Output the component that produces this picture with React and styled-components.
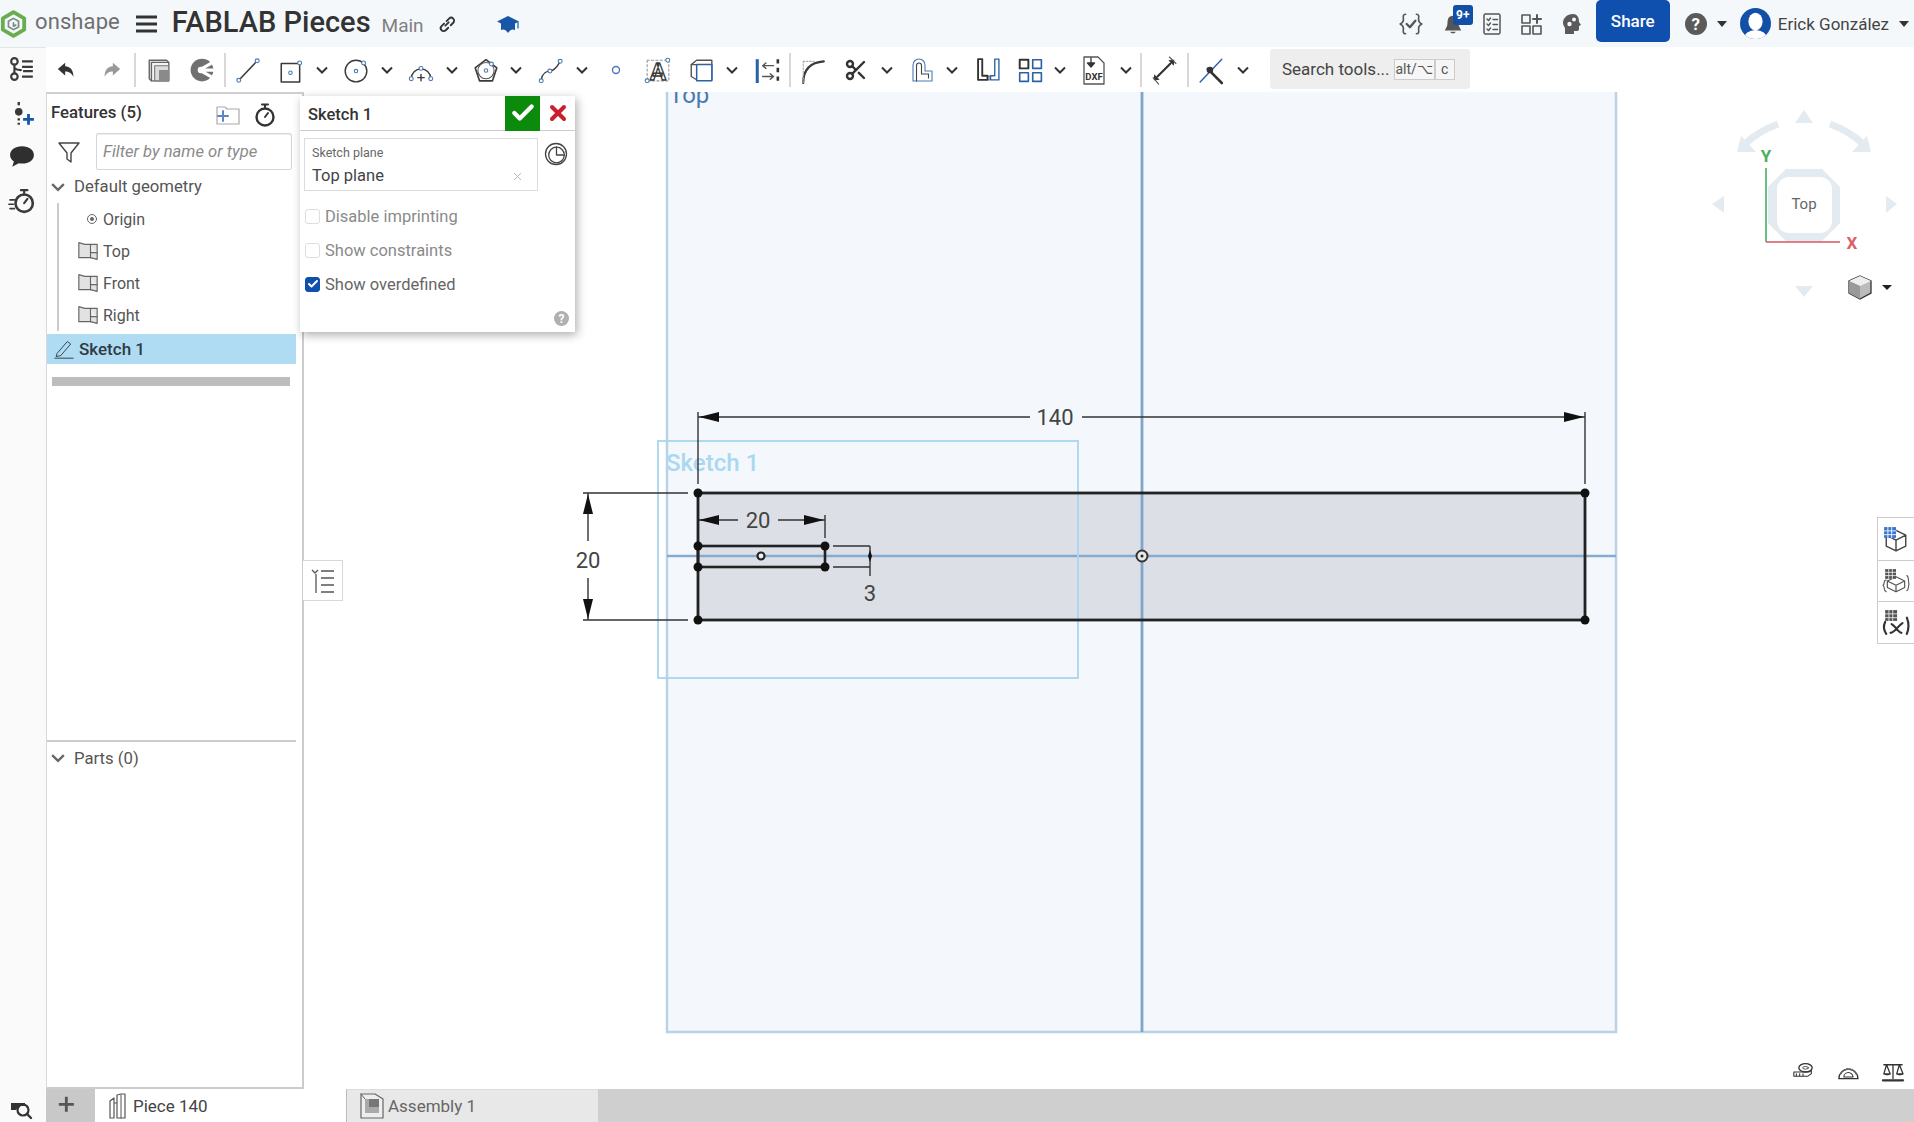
import React from "react";
import styled, { createGlobalStyle } from "styled-components";
import { Scissors, Check, X } from "lucide-react";

const Global = createGlobalStyle`
  html, body { margin: 0; padding: 0; height: 100%; background: #fff; overflow: hidden; }
  #root { height: 100%; }
  * { box-sizing: border-box; }
  body { font-family: Roboto, "Liberation Sans", sans-serif; color: #333; }
`;

const Page = styled.div`width: 1914px; height: 1122px; display: flex; flex-direction: column; overflow: hidden;`;
const TopBar = styled.header`height: 47px; flex: none; background: #f4f8fb; display: flex; align-items: center;`;
const TopItem = styled.div`display: flex; align-items: center; flex: none; margin-left: ${p => p.$ml || 0}px; position: relative;`;
const Word = styled.span`font-size: 22px; color: #6f6f6f; letter-spacing: 0.1px; margin-left: ${p => p.$ml || 0}px; padding-bottom: 4px;`;
const Title = styled.h1`margin: 0 0 0 ${p => p.$ml}px; font-size: 29px; font-weight: 500; color: #333; white-space: nowrap; padding-bottom: 4px;`;
const Branch = styled.span`margin-left: ${p => p.$ml}px; font-size: 19px; color: #808080; padding-top: 4px;`;
const Spacer = styled.div`flex: 1;`;
const Badge = styled.span`position: absolute; left: 11px; top: -7px; width: 20px; height: 20px; background: #1250a8; color: #fff; font-size: 12px; font-weight: 700; border-radius: 3px; display: flex; align-items: center; justify-content: center;`;
const ShareBtn = styled.button`margin-left: ${p => p.$ml}px; width: 74px; height: 42px; margin-top: -5px; border: 0; border-radius: 5px; background: #0f4fad; color: #fff; font: 500 17px Roboto, sans-serif; flex: none;`;
const UserName = styled.span`font-size: 17px; color: #444; margin-left: ${p => p.$ml}px; white-space: nowrap;`;
const Caret = styled.span`width: 0; height: 0; border-left: 5px solid transparent; border-right: 5px solid transparent; border-top: 6px solid #333; margin-left: ${p => p.$ml || 0}px; flex: none;`;

const Body = styled.div`flex: 1; display: flex; min-height: 0;`;
const Rail = styled.nav`width: 46px; flex: none; background: #fafafa; display: flex; flex-direction: column; align-items: center; padding-right: 3px; border-top: 1px solid #e4e4e4;`;
const RailIcon = styled.div`height: 24px; display: flex; align-items: center; justify-content: center; margin-top: ${p => p.$mt}px;`;
const RailEnd = styled.div`margin-top: auto; height: 22px; padding-bottom: 2px; display: flex; align-items: flex-end;`;
const MainCol = styled.div`flex: 1; display: flex; flex-direction: column; min-width: 0;`;
const Toolbar = styled.div`height: 45px; flex: none; background: #fff; display: flex; align-items: center; position: relative;`;
const Tool = styled.div`flex: none; width: ${p => p.$w}px; margin-left: ${p => p.$ml}px; display: flex; align-items: center; justify-content: center; height: 24px; overflow: visible;`;
const Sep = styled.div`flex: none; width: 2px; height: 34px; background: #d8d8d8; margin-left: ${p => p.$ml}px;`;
const SearchBox = styled.div`position: absolute; left: 1224px; top: 2px; width: 200px; height: 40px; background: #eeeeee; border-radius: 3px; display: flex; align-items: center; padding-left: 12px; font-size: 17px; color: #444;`;
const Kbd = styled.span`font-size: 14px; height: 21px; width: ${p => p.$w}px; border: 1px solid #ccc; background: #f6f6f6; color: #555; display: flex; align-items: center; justify-content: center; flex: none; margin-left: ${p => p.$ml || 0}px;`;

const Workspace = styled.div`flex: 1; display: flex; position: relative; min-height: 0;`;
const Panel = styled.aside`width: 258px; flex: none; background: #fff; border-left: 1px solid #d8d8d8; border-right: 2px solid #ccc; border-top: 2px solid #d0d0d0; border-bottom: 2px solid #ccc; display: flex; flex-direction: column;`;
const PanelTop = styled.div`flex: 1; display: flex; flex-direction: column; min-height: 0; width: 249px;`;
const PanelHead = styled.div`height: 39px; display: flex; align-items: center; padding-left: 4px; position: relative;`;
const PanelTitle = styled.span`font-size: 16.8px; font-weight: 500; color: #333; flex: 1; margin-top: -4px;`;
const HeadIcons = styled.div`display: flex; gap: 13px; margin-right: 19px; margin-top: 3px;`;
const FilterRow = styled.div`display: flex; align-items: center; height: 37px; padding-left: 10px;`;
const FilterInput = styled.div`width: 196px; height: 37px; margin-left: 15px; border: 1px solid #d6d6d6; border-radius: 2px; font-style: italic; font-size: 16.6px; color: #8a8a8a; display: flex; align-items: center; padding-left: 6px; box-shadow: inset 0 1px 1px #eee;`;
const GroupRow = styled.div`height: 33px; display: flex; align-items: center; padding-left: 4px; font-size: 16.7px; color: #555;`;
const GroupLabel = styled.span`margin-left: 9px;`;
const TreeList = styled.div`position: relative; margin-left: 10px; border-left: 2px solid #ccc; height: 128px; display: flex; flex-direction: column;`;
const TreeRow = styled.div`height: 32px; flex: none; display: flex; align-items: center; font-size: 16px; color: #555;`;
const TreeIconBox = styled.div`width: 44px; display: flex; justify-content: flex-end; padding-right: 5px; flex: none;`;
const Selected = styled.div`height: 30px; margin-top: 3px; background: #b0dcf3; display: flex; align-items: center; padding-left: 7px; font-size: 17px; font-weight: 500; color: #2f3a44; flex: none;`;
const SelLabel = styled.span`margin-left: 5px;`;
const ScrollBar = styled.div`height: 9px; margin: 13px 6px 0 5px; background: #bdbdbd; flex: none;`;
const PartsSection = styled.div`height: 347px; flex: none; width: 249px; border-top: 2px solid #ccc;`;
const PartsRow = styled(GroupRow)`height: 32px;`;

const Canvas = styled.main`flex: 1; position: relative; overflow: hidden; background: #fff; min-width: 0;`;
const Drawing = styled.svg`position: absolute; inset: 0; width: 100%; height: 100%; display: block;`;

const Dialog = styled.section`position: absolute; left: 254px; top: 4px; width: 275px; height: 236px; background: #fff; box-shadow: 2px 3px 9px rgba(0,0,0,.32); display: flex; flex-direction: column; z-index: 3;`;
const DialogHead = styled.div`height: 35px; flex: none; display: flex; align-items: center; border-bottom: 1px solid #ccc; padding-left: 8px;`;
const DialogTitle = styled.span`flex: 1; font-size: 16.5px; font-weight: 500; color: #333; padding-top: 3px;`;
const OkBtn = styled.div`width: 35px; height: 35px; background: #0b8a0b; display: flex; align-items: center; justify-content: center; color: #fff;`;
const CancelBtn = styled.div`width: 35px; height: 35px; display: flex; align-items: center; justify-content: center; color: #c8202c;`;
const FieldRow = styled.div`display: flex; padding: 7px 0 0 4px; align-items: flex-start;`;
const Field = styled.div`width: 234px; height: 53px; border: 1px solid #dcdcdc; padding: 6px 0 0 7px; position: relative; flex: none;`;
const FieldLabel = styled.div`font-size: 12.5px; color: #666; line-height: 15px;`;
const FieldValue = styled.div`font-size: 16.5px; color: #444; line-height: 20px; margin-top: 6px;`;
const FieldClear = styled.div`position: absolute; right: 13px; top: 31px; color: #aaa; display: flex;`;
const ClockWrap = styled.div`margin-left: 6px; margin-top: 4px;`;
const CheckList = styled.div`display: flex; flex-direction: column; margin-top: 8px; padding-left: 5px;`;
const CheckRow = styled.label`height: 34px; display: flex; align-items: center; font-size: 16.5px; color: ${p => p.$on ? "#666" : "#8a8a8a"};`;
const Box = styled.span`width: 15px; height: 15px; border-radius: 3px; margin-right: 5px; display: flex; align-items: center; justify-content: center; color: #fff; flex: none; background: ${p => p.$on ? "#0f4fad" : "#fff"}; border: 1px solid ${p => p.$on ? "#0f4fad" : "#ddd"};`;
const HelpCorner = styled.div`position: absolute; right: 6px; bottom: 6px; width: 15px; height: 15px; border-radius: 50%; background: #b0b0b0; color: #fff; font-size: 12px; font-weight: 700; display: flex; align-items: center; justify-content: center;`;

const PanelToggle = styled.div`position: absolute; left: 257px; top: 468px; width: 40px; height: 41px; background: #fff; border: 1px solid #d8d8d8; border-left: 0; display: flex; align-items: center; justify-content: center; z-index: 2;`;
const SideTabs = styled.div`position: absolute; right: 0; top: 425px; width: 37px; background: #fff; border: 1px solid #ccc; border-right: 0; display: flex; flex-direction: column;`;
const SideTab = styled.div`height: 41.5px; display: flex; align-items: center; justify-content: center; & + & { border-top: 1px solid #ccc; }`;
const MeasureTools = styled.div`position: absolute; right: 9px; bottom: 5px; display: flex; gap: 20px;`;

const Tabs = styled.div`height: 33px; flex: none; display: flex; background: #cfcfcf;`;
const PlusTab = styled.div`width: 49px; background: #c8c8c8; display: flex; align-items: center; justify-content: center; padding-right: 6px;`;
const TabItem = styled.div`width: ${p => p.$w}px; flex: none; background: ${p => p.$on ? "#fff" : "#e8e8e8"}; display: flex; align-items: center; padding-left: ${p => p.$on ? 14 : 13}px; font-size: 17px; color: ${p => p.$on ? "#444" : "#666"}; gap: 4px; border-left: ${p => p.$on ? "0" : "1px solid #bbb"}; border-top: ${p => p.$on ? "0" : "1px solid #ddd"};`;

/* ---------- drawn icons ---------- */
const I = ({ s = 24, w, h, vb = "0 0 24 24", children }) => (
  <svg width={w || s} height={h || s} viewBox={vb} fill="none" strokeLinecap="round" strokeLinejoin="round" style={{ display: "block", flex: "none", overflow: "visible" }}>{children}</svg>
);
const D = "#3a3a3a", B = "#4a7ab8", G = "#555";

const Logo = () => <I w={27} h={30}>
  <path d="M12 1.5 21.5 7v10L12 22.5 2.500 17V7z" stroke="#6aad4e" strokeWidth="3.4" />
  <path d="M12 7l4.500 2.600v5L12 17l-4.500-2.500v-5L12 7zM12 11v3l2-1" stroke="#7a8c80" strokeWidth="1.500" />
</I>;
const Burger = () => <I w={21} h={18} vb="0 0 21 18"><path d="M0 2h21M0 9h21M0 16h21" stroke="#333" strokeWidth="3" strokeLinecap="butt" /></I>;
const LinkI = () => <I s={20}><path d="M10 14l4-4M8.500 11.500l-3 3a3.500 3.500 0 0 0 5 5l3-3M11.500 8.500l3-3a3.500 3.500 0 0 1 5 5l-3 3" stroke="#333" strokeWidth="2.200" /></I>;
const Cap = () => <I s={24}><path d="M12 4 1 9.500l4 2V18c2-1 4.500-1 7 3 2.500-4 5-4 7-3v-6.500l4-2z" fill="#1a56a8" /><path d="M22 10v6" stroke="#1a56a8" strokeWidth="1.200" /></I>;
const Braces = () => <I s={26}><path d="M7 3c-3 0-2 3-2 5s-1 3-3 4c2 1 3 2 3 4s-1 5 2 5M17 3c3 0 2 3 2 5s1 3 3 4c-2 1-3 2-3 4s1 5-2 5" stroke={G} strokeWidth="1.500" /><path d="M8 12l3 3 5-6" stroke={G} strokeWidth="2.200" /></I>;
const Bell = () => <I w={22} h={24}><path d="M12 3c-5 0-6 4-6 8 0 4-2 6-3 8h18c-1-2-3-4-3-8 0-4-1-8-6-8zM9 20.500c1 2.500 5 2.500 6 0z" fill={G} /></I>;
const Checklist = () => <I s={24}><rect x="4" y="2" width="16" height="20" rx="1.500" stroke={G} strokeWidth="1.500" /><path d="M7 7l1.500 1.500L10.500 6M13 7.500h4.500M7 12l1.500 1.500L10.500 11M13 12.500h4.500M7 17l1.500 1.500L10.500 16M13 17.500h4.500" stroke={G} strokeWidth="1.400" /></I>;
const Apps = () => <I s={24}><path d="M3 3h8v8H3zM3 14h8v8H3zM14 14h8v8h-8z" stroke={G} strokeWidth="1.600" /><path d="M18 3v8M14 7h8" stroke={G} strokeWidth="2" /></I>;
const Head = () => <I s={24}><path d="M13 2C7 2 3 6 3 11c0 2 1 3 2 5v6h9v-3h3c1.500 0 2-1 2-2v-3l2-1-2-3c0-5-2-8-6-8z" fill="#5a5a5a" /><circle cx="9.500" cy="12" r="2.200" fill="#f4f8fb" /><circle cx="14" cy="7.500" r="2" fill="#f4f8fb" /></I>;
const TopItemCircle = styled.div`width: 22px; height: 22px; border-radius: 50%; background: #5a5a5a; color: #fff; font-size: 17px; font-weight: 700; display: flex; align-items: center; justify-content: center;`;
const HelpI = () => <TopItemCircle>?</TopItemCircle>;
const Avatar = () => <I s={31}><defs><clipPath id="av"><circle cx="12" cy="12" r="12" /></clipPath></defs><g clipPath="url(#av)"><rect width="24" height="24" fill="#1250a8" /><ellipse cx="12" cy="10.500" rx="5.500" ry="6.800" fill="#fff" /><ellipse cx="12" cy="24" rx="9" ry="7" fill="#fff" /></g></I>;

const RailTree = () => <I s={26}><circle cx="5" cy="5" r="3" stroke={D} strokeWidth="2" /><circle cx="5" cy="19" r="3" stroke={D} strokeWidth="2" /><path d="M5 8v8M5 11c2 2 4 2 6 2" stroke={D} strokeWidth="2" /><path d="M12 5h10M12 10h10M13 14h9M12 19h10" stroke={D} strokeWidth="2" strokeLinecap="butt" /></I>;
const RailInsert = () => <I s={26}><circle cx="9" cy="10" r="3.500" fill={D} /><path d="M9 1v3M9 16v2M9 20v2" stroke={D} strokeWidth="2.200" strokeLinecap="butt" /><path d="M18 12v10M13 17h10" stroke="#1a56a8" strokeWidth="2.600" strokeLinecap="butt" /></I>;
const RailComment = () => <I s={26}><path d="M12 3C5.500 3 1 6.500 1 11c0 2.500 1.500 4.500 3.500 6L3 22l6-3.300c1 .2 2 .3 3 .3 6.500 0 11-3.500 11-8s-4.500-8-11-8z" fill="#2f2f2f" /></I>;
const RailWatch = () => <I s={26}><circle cx="14" cy="14" r="8" stroke={D} strokeWidth="2.400" /><path d="M11 2h6M14 2v4M14 14l3-4" stroke={D} strokeWidth="2" /><path d="M1 11h4M0 15h4M1 19h4" stroke={D} strokeWidth="1.600" /></I>;
const SearchCam = () => <I s={24}><path d="M1 7h14v3h-6l-3 4H1z" fill="#333" /><circle cx="13" cy="14" r="5.500" stroke="#333" strokeWidth="2.200" /><path d="M17 18l4 4" stroke="#333" strokeWidth="2.400" /></I>;

const Undo = ({ c = "#333" }) => <I s={22}><path d="M10 4 2 11l8 7v-4.500c4 0 7 1.500 9 6 0-7-3-11-9-11.500z" fill={c} /></I>;
const Redo = () => <I s={22}><path d="M14 4l8 7-8 7v-4.500c-4 0-7 1.500-9 6 0-7 3-11 9-11.500z" fill="#999" /></I>;
const Studio = () => <I s={26}><path d="M3 3h16l2 2v17H5l-2-2z" fill="#f4f4f4" stroke="#666" strokeWidth="1.300" /><path d="M5 5h16M5 5v17" stroke="#666" strokeWidth="1.300" /><rect x="8" y="8" width="13" height="14" fill="#dcdcdc" stroke="#777" /><rect x="12" y="12" width="9" height="10" fill="#8a8a8a" /></I>;
const Sub = () => <I s={26}><circle cx="12" cy="12" r="10.500" fill="#707070" /><circle cx="11" cy="12" r="3" fill="#fff" /><path d="M13 10l9-5M13 14l9 5M14 12h9" stroke="#fff" strokeWidth="3" /></I>;
const Pt = ({ x, y, r = 1.800 }) => <circle cx={x} cy={y} r={r} fill="#fff" stroke={B} strokeWidth="1" />;
const LineI = () => <I s={26}><path d="M4 21 20 4" stroke={D} strokeWidth="1.400" /><Pt x={3.500} y={21.500} /><Pt x={20.500} y={3.500} /></I>;
const RectI = () => <I s={26}><rect x="3" y="6" width="17" height="17" stroke={D} strokeWidth="1.400" /><Pt x={11.500} y={14.500} r={1.600} /><Pt x={20} y={5.500} /></I>;
const CircleI = () => <I s={26}><circle cx="12" cy="13" r="10" stroke={D} strokeWidth="1.300" /><Pt x={12} y={13} r={1.600} /><Pt x={19} y={5.500} /></I>;
const ArcI = () => <I s={26}><path d="M3 20a9 9 0 0 1 18 0" stroke={D} strokeWidth="1.300" /><Pt x={3} y={20} /><Pt x={21} y={20} /><Pt x={12} y={10.500} /><path d="M12 16v6M9 19h6" stroke={D} strokeWidth="1.300" /></I>;
const PolyI = () => <I s={26}><path d="M12 2.500 22 10l-4 12H6L2 10z" stroke={D} strokeWidth="1.500" /><circle cx="12" cy="12.500" r="7.500" stroke={G} strokeWidth="1" /><Pt x={12} y={12.500} r={1.600} /><Pt x={17} y={6.500} /></I>;
const SplineI = () => <I s={26}><path d="M3 21c1-6 5-8 8-8s6-3 9-8" stroke={D} strokeWidth="1.300" /><Pt x={3} y={22} /><Pt x={11} y={13} /><Pt x={20.500} y={4} /></I>;
const PointI = () => <I s={14} vb="0 0 14 14"><circle cx="7" cy="7" r="3.500" stroke={B} strokeWidth="1.400" /></I>;
const TextI = () => <I s={26}><rect x="2" y="3" width="20" height="19" stroke="#999" strokeDasharray="2 2" /><text x="12" y="21" fontSize="22" textAnchor="middle" fontFamily="Roboto" fontWeight="700" fill="#fff" stroke={D} strokeWidth="1.200">A</text><Pt x={21} y={3} /><Pt x={2} y={22} /></I>;
const PlaneI = () => <I s={26}><path d="M3 7l5-4h14v18H8l-5-3z" fill="#fff" stroke="#555" strokeWidth="1.300" /><rect x="8" y="7" width="14" height="15" fill="#fff" stroke="#2a62a8" strokeWidth="1.400" /><path d="M3 7l5 0" stroke="#555" /></I>;
const MirrorI = () => <I s={26}><path d="M3 2v22" stroke="#2a62a8" strokeWidth="2.800" strokeLinecap="butt" /><path d="M22 2v22" stroke="#333" strokeWidth="2.400" strokeDasharray="4 4" strokeLinecap="butt" /><path d="M8 8h10M8 8l3-2.500M8 8l3 2.500M8 18h10M18 18l-3-2.500M18 18l-3 2.500" stroke="#555" strokeWidth="1.300" /></I>;
const FilletI = () => <I s={26}><path d="M3 24c0-12 6-19 19-20" stroke={D} strokeWidth="2" /><path d="M3 4h10M3 4v20" stroke="#aaa" strokeDasharray="1.500 1.500" /></I>;
const OffsetI = () => <I s={24}><path d="M3 23V7a6 6 0 0 1 12 0v6h7v10z" stroke="#4a7ab8" strokeWidth="1.100" /><path d="M6.500 23V7.500a2.500 2.500 0 0 1 5 0V16h7v4" stroke="#444" strokeWidth="1.100" /></I>;
const TransI = () => <I s={25}><path d="M2 2h4v16h5v4H2z" stroke="#333" strokeWidth="1.800" /><path d="M18 2h4v20h-8v-4h4z" stroke="#2a62a8" strokeWidth="1.300" /><path d="M12.500 18v4" stroke="#333" strokeDasharray="1.500 1.500" /></I>;
const PatternI = () => <I s={26}><rect x="2.500" y="2.500" width="8" height="8" stroke="#333" strokeWidth="1.800" /><rect x="14.500" y="2.500" width="8" height="8" stroke="#2a62a8" strokeWidth="1.500" /><rect x="2.500" y="14.500" width="8" height="8" stroke="#2a62a8" strokeWidth="1.500" /><rect x="14.500" y="14.500" width="8" height="8" stroke="#2a62a8" strokeWidth="1.500" /></I>;
const DxfI = () => <I w={24} h={30} vb="0 0 24 30"><path d="M2 2h14l6 6v21H2z" fill="#fff" stroke="#555" strokeWidth="1.300" /><path d="M9 3v8M5.500 8 9 12l3.500-4z" fill="#333" stroke="#333" strokeWidth="1.300" /><text x="12" y="25" fontSize="9.500" fontWeight="700" fontFamily="Roboto" textAnchor="middle" fill="#333">DXF</text></I>;
const DimI = () => <I s={26}><path d="M6 18 18 6" stroke="#333" strokeWidth="2" /><path d="M3 16l-.5 5.500L8 21zM16 3l5.500-.5L21 8z" fill="#333" /><path d="M2 19l5 6M17 0l6 6" stroke="#555" strokeWidth="1" /></I>;
const SnapI = () => <I s={26}><path d="M2 23 22 2" stroke="#2a62a8" strokeWidth="1.300" /><path d="M9 11l13 13" stroke="#333" strokeWidth="2.400" /><circle cx="11" cy="12" r="3" fill="#333" /></I>;
const Chev = ({ c = "#333", s = 12 }) => <I w={s} h={s} vb="0 0 12 12"><path d="M1 3.500 6 8.500 11 3.500" stroke={c} strokeWidth="2" strokeLinecap="butt" strokeLinejoin="miter" /></I>;

const FolderPlus = () => <I s={24}><path d="M1 4h8l2 2h12v15H1z" stroke="#aaa" strokeWidth="1.200" /><path d="M7 8v10M2 13h10" stroke="#5a86c8" strokeWidth="2" /></I>;
const Watch = () => <I s={24}><circle cx="12" cy="14" r="8.500" stroke="#333" strokeWidth="2.400" /><path d="M9 1.500h6M12 2v3M12 14l3-4" stroke="#333" strokeWidth="2" /></I>;
const Funnel = () => <I s={24}><path d="M2 3h20l-8 10v9l-4-3v-6z" stroke="#444" strokeWidth="1.400" /></I>;
const OriginI = () => <I s={12} vb="0 0 12 12"><circle cx="6" cy="6" r="4.500" stroke="#666" strokeWidth="1" /><circle cx="6" cy="6" r="2" fill="#666" /></I>;
const PlaneTree = () => <I w={20} h={20}><path d="M1 2l7 2h15v18l-8-2H1z" fill="#e2e2e2" stroke="#666" strokeWidth="1.400" /><path d="M15 4v10h8" fill="#eee" stroke="#666" strokeWidth="1.400" /><path d="M15 14v6" stroke="#666" strokeWidth="1.400" /></I>;
const Pencil = () => <I s={20}><path d="M4 17 16 3l4 3L8 20l-5 1zM1 23h22" stroke="#37474f" strokeWidth="1.200" /></I>;
const ClockI = () => <I s={24}><circle cx="12" cy="12" r="10.500" stroke="#444" strokeWidth="1.300" /><circle cx="12.500" cy="13" r="7.800" stroke="#444" strokeWidth="1.300" /><path d="M12.500 5v8h8" fill="#fff" stroke="#444" strokeWidth="1.300" /></I>;
const ToggleI = () => <I s={24}><path d="M1 1l3 3 3-3M5 5v19M10 2h13M10 9h13M10 16h13M10 23h13" stroke="#555" strokeWidth="1.300" strokeLinecap="butt" /></I>;
const Cube = ({ c = "#444" }) => <path d="M12 4 21 8.500v10L12 23l-9-4.500v-10zM3 8.500 12 13l9-4.500M12 13v10" stroke={c} strokeWidth="1.300" fill="#fff" />;
const SideA = () => <I s={26}><Cube /><g fill="#3a75cc"><rect x="1" y="1" width="11" height="10" /></g><path d="M4.500 1v10M8 1v10M1 4.500h11M1 8h11" stroke="#fff" strokeWidth=".8" /></I>;
const SideB = () => <I s={26}><path d="M12 8 20 12v6l-8 4-8-4v-6zM4 12l8 4 8-4M12 16v6" stroke="#555" strokeWidth="1.100" fill="#fff" /><rect x="2" y="1" width="10" height="9" fill="#555" /><path d="M5.300 1v9M8.600 1v9M2 4h10M2 7h10" stroke="#fff" strokeWidth=".7" /><path d="M3 11c-3 0-1 4-3 5 2 1 0 5 3 6M22 7c2 1 1 4 2 8-1 3 0 5-2 6" stroke="#555" /></I>;
const SideC = () => <I s={26}><rect x="2" y="1" width="11" height="10" fill="#555" /><path d="M5.500 1v10M9 1v10M2 4.500h11M2 8h11" stroke="#fff" strokeWidth=".7" /><path d="M2 12c-2 4-1 8 1 11M22 8c2 5 2 10 0 15M7 22c4 0 6-6 11-9M8 14c3 1 6 8 9 8" stroke="#333" strokeWidth="2" /></I>;
const Tape = () => <I w={24} h={20}><ellipse cx="15" cy="7" rx="8" ry="5" stroke="#333" strokeWidth="1.600" /><ellipse cx="15" cy="7" rx="3.500" ry="1.600" stroke="#333" /><path d="M1 12h7l3 0h8l3-2v4l-4 3H1zM4 14v3M8 14v3M12 14v3" stroke="#333" strokeWidth="1.300" /></I>;
const Protractor = () => <I w={26} h={20}><path d="M1 20a11.500 11.500 0 0 1 23 0z" stroke="#333" strokeWidth="1.600" /><path d="M7 18a5.500 5.500 0 0 1 11 0z" stroke="#333" strokeWidth="1.300" /><path d="M3.500 14a10 10 0 0 1 18 0" stroke="#666" strokeWidth="2" strokeDasharray="1 2" /></I>;
const Scale = () => <I w={24} h={22}><path d="M2 3h20M12 3v15M5 3 2 13h7zM19 3l-3 10h7z" stroke="#333" strokeWidth="1.400" /><path d="M2 13c1 2 6 2 7 0zM16 13c1 2 6 2 7 0z" fill="#333" /><path d="M1 20h22" stroke="#333" strokeWidth="2.400" /></I>;
const PieceI = () => <I w={20} h={26} vb="0 0 20 26"><path d="M1 8l4-3v20H1zM5 10h3M8 2l4-1 4 0v24H8z" stroke="#555" strokeWidth="1.200" /><path d="M12 2v23" stroke="#555" /></I>;
const AsmI = () => <I w={24} h={28} vb="0 0 24 28"><path d="M1 2h14l8 5v19l-8 0H1z" fill="#eee" stroke="#666" strokeWidth="1.200" /><path d="M5 7h14v14H5z" fill="#aaa" /><path d="M9 7h10v8H9z" fill="#777" /><path d="M1 2l4 5" stroke="#666" /></I>;
const Plus = () => <I s={20}><path d="M10 1v18M1 10h18" stroke="#555" strokeWidth="3.400" strokeLinecap="butt" /></I>;

/* toolbar: [kind, centre x on the page, icon] */
const toolItems = [
  ["t", 67, <Undo />], ["t", 111, <Redo />], ["s", 135], ["t", 159, <Studio />], ["t", 202, <Sub />], ["s", 225],
  ["t", 248, <LineI />], ["t", 291, <RectI />], ["c", 322], ["t", 356, <CircleI />], ["c", 387], ["t", 421, <ArcI />], ["c", 452],
  ["t", 486, <PolyI />], ["c", 516], ["t", 551, <SplineI />], ["c", 582], ["t", 616, <PointI />], ["t", 658, <TextI />],
  ["t", 701, <PlaneI />], ["c", 732], ["t", 767, <MirrorI />], ["s", 790], ["t", 813, <FilletI />],
  ["t", 856, <Scissors size={24} color="#333" strokeWidth={2.4} />], ["c", 887], ["t", 922, <OffsetI />], ["c", 952], ["t", 988, <TransI />],
  ["t", 1030, <PatternI />], ["c", 1060], ["t", 1094, <DxfI />], ["c", 1126], ["s", 1141], ["t", 1164, <DimI />], ["s", 1188],
  ["t", 1211, <SnapI />], ["c", 1243],
];
const width = { t: 26, c: 12, s: 2 };
const laidOut = toolItems.map((it, i) => {
  const prev = toolItems[i - 1];
  const w = width[it[0]];
  const prevEnd = prev ? prev[1] + width[prev[0]] / 2 : 46;
  return { kind: it[0], w, ml: it[1] - w / 2 - prevEnd, icon: it[2] };
});

const Arrow = ({ x, y, dir }) => {
  const L = 20, H = 5;
  const pts = {
    l: `${x},${y} ${x + L},${y - H} ${x + L},${y + H}`,
    r: `${x},${y} ${x - L},${y - H} ${x - L},${y + H}`,
    u: `${x},${y} ${x - H},${y + L} ${x + H},${y + L}`,
    d: `${x},${y} ${x - H},${y - L} ${x + H},${y - L}`,
  }[dir];
  return <polygon points={pts} fill="#111" />;
};
const DimText = styled.text`font: 400 22px Roboto, sans-serif; fill: #444; text-anchor: middle; dominant-baseline: central;`;
const PlaneText = styled.text`font: 400 24px Roboto, sans-serif; fill: #4a7ab0;`;
const SketchText = styled.text`font: 500 24px Roboto, sans-serif; fill: #a9d8f2;`;
const CubeText = styled.text`font: 400 15px Roboto, sans-serif; fill: #666; text-anchor: middle; dominant-baseline: central;`;
const AxisText = styled.text`font: 700 17px Roboto, sans-serif; fill: ${p => p.$c}; text-anchor: middle; dominant-baseline: central;`;

const SketchDot = ({ x, y }) => <circle cx={x} cy={y} r="4.500" fill="#111" />;

const Scene = () => (
  <Drawing viewBox="304 92 1610 997">
    <rect x="667" y="60" width="949" height="972" fill="#f4f8fc" stroke="#b9d2e6" strokeWidth="2.500" />
    <PlaneText x="669" y="103">Top</PlaneText>
    <rect x="698" y="493" width="887" height="127" fill="#dcdfe5" />
    <path d="M1142 60V1032" stroke="#7ea6cb" strokeWidth="2.800" />
    <path d="M667 556H1616" stroke="#86abd0" strokeWidth="2.400" />
    <rect x="658" y="441" width="420" height="237" fill="none" stroke="#a9d6ee" strokeWidth="1.800" />
    <SketchText x="666" y="471">Sketch 1</SketchText>
    {/* overall width */}
    <path d="M698 412V484M1585 412V484M698 417H1030M1082 417H1585" stroke="#333" strokeWidth="1.400" fill="none" />
    <Arrow x={699} y={417} dir="l" /><Arrow x={1584} y={417} dir="r" />
    <DimText x="1055" y="417">140</DimText>
    {/* overall height */}
    <path d="M583 493H688M583 620H688M588 493V541M588 578V620" stroke="#333" strokeWidth="1.400" fill="none" />
    <Arrow x={588} y={494} dir="u" /><Arrow x={588} y={619} dir="d" />
    <DimText x="588" y="560">20</DimText>
    {/* slot width */}
    <path d="M698 520H738M778 520H825M825 515V538" stroke="#333" strokeWidth="1.400" fill="none" />
    <Arrow x={699} y={520} dir="l" /><Arrow x={824} y={520} dir="r" />
    <DimText x="758" y="520">20</DimText>
    {/* slot height */}
    <path d="M833 546H870M833 567H870M870 546V576" stroke="#333" strokeWidth="1.400" fill="none" />
    <polygon points="870,550 868,556 870,562 872,556" fill="#111" />
    <DimText x="870" y="593">3</DimText>
    {/* outline */}
    <rect x="698" y="493" width="887" height="127" fill="none" stroke="#222" strokeWidth="2.800" />
    <rect x="698" y="546" width="127" height="21" fill="none" stroke="#222" strokeWidth="2.600" />
    {[[698, 493], [1585, 493], [698, 620], [1585, 620], [698, 546], [698, 567], [825, 546], [825, 567]].map(([x, y]) => <SketchDot key={x + "-" + y} x={x} y={y} />)}
    <circle cx="761" cy="556" r="3.500" fill="#eef0f3" stroke="#222" strokeWidth="2.200" />
    <circle cx="1142" cy="556" r="5.500" fill="#e8e8ea" stroke="#333" strokeWidth="2" />
    <circle cx="1142" cy="556" r="1.500" fill="#222" />
    {/* view cube */}
    <g fill="#e3eaf0">
      <polygon points="1804,110 1795,123 1813,123" />
      <polygon points="1712,204 1724,196 1724,213" />
      <polygon points="1897,204 1886,196 1886,213" />
      <polygon points="1804,297 1795,286 1813,286" />
      <polygon points="1737,152 1756,152 1741,136" />
      <polygon points="1871,152 1852,152 1867,136" />
      <path d="M1786 169h36l18 18v36l-18 18h-36l-18-18v-36z" />
    </g>
    <path d="M1778 124Q1759 131 1746 143M1830 124Q1849 131 1862 143" stroke="#e3eaf0" strokeWidth="7" fill="none" />
    <rect x="1777" y="177" width="55" height="56" rx="12" fill="#fff" />
    <CubeText x="1804" y="204">Top</CubeText>
    <path d="M1766 168V242" stroke="#3aa655" strokeWidth="1.500" />
    <path d="M1766 242H1840" stroke="#d9535c" strokeWidth="1.500" />
    <AxisText $c="#4cae5f" x="1766" y="156">Y</AxisText>
    <AxisText $c="#dc5f68" x="1852" y="243">X</AxisText>
    <path d="M1860 276l11 5v12l-11 6-11-6v-12z" fill="#bbb" stroke="#333" strokeWidth="1.300" />
    <path d="M1860 276l11 5-11 5-11-5z" fill="#eee" />
    <path d="M1860 286v13l-11-6v-12z" fill="#999" />
    <polygon points="1882,285 1892,285 1887,290" fill="#222" />
  </Drawing>
);

export default function App() {
  return (
    <Page>
      <Global />
      <TopBar>
        <TopItem><Logo /></TopItem>
        <Word $ml={8}>onshape</Word>
        <TopItem $ml={16}><Burger /></TopItem>
        <Title $ml={15}>FABLAB Pieces</Title>
        <Branch $ml={11}>Main</Branch>
        <TopItem $ml={13}><LinkI /></TopItem>
        <TopItem $ml={39}><Cap /></TopItem>
        <Spacer />
        <TopItem><Braces /></TopItem>
        <TopItem $ml={18}><Bell /><Badge>9+</Badge></TopItem>
        <TopItem $ml={16}><Checklist /></TopItem>
        <TopItem $ml={15}><Apps /></TopItem>
        <TopItem $ml={17}><Head /></TopItem>
        <ShareBtn $ml={12}>Share</ShareBtn>
        <TopItem $ml={15}><HelpI /></TopItem>
        <Caret $ml={10} />
        <TopItem $ml={13}><Avatar /></TopItem>
        <UserName $ml={7}>Erick González</UserName>
        <Caret $ml={10} />
        <TopItem $ml={5} />
      </TopBar>
      <Body>
        <Rail>
          <RailIcon $mt={9}><RailTree /></RailIcon>
          <RailIcon $mt={21}><RailInsert /></RailIcon>
          <RailIcon $mt={18}><RailComment /></RailIcon>
          <RailIcon $mt={21}><RailWatch /></RailIcon>
          <RailEnd><SearchCam /></RailEnd>
        </Rail>
        <MainCol>
          <Toolbar>
            {laidOut.map((t, i) => t.kind === "s"
              ? <Sep key={i} $ml={t.ml} />
              : <Tool key={i} $w={t.w} $ml={t.ml}>{t.kind === "c" ? <Chev /> : t.icon}</Tool>)}
            <SearchBox>
              Search tools...
              <Kbd $w={41} $ml={4}>alt/⌥</Kbd>
              <Kbd $w={20}>c</Kbd>
            </SearchBox>
          </Toolbar>
          <Workspace>
            <Panel>
              <PanelTop>
                <PanelHead>
                  <PanelTitle>Features (5)</PanelTitle>
                  <HeadIcons><FolderPlus /><Watch /></HeadIcons>
                </PanelHead>
                <FilterRow>
                  <Funnel />
                  <FilterInput>Filter by name or type</FilterInput>
                </FilterRow>
                <GroupRow><Chev c="#666" s={14} /><GroupLabel>Default geometry</GroupLabel></GroupRow>
                <TreeList>
                  <TreeRow><TreeIconBox><OriginI /></TreeIconBox>Origin</TreeRow>
                  <TreeRow><TreeIconBox><PlaneTree /></TreeIconBox>Top</TreeRow>
                  <TreeRow><TreeIconBox><PlaneTree /></TreeIconBox>Front</TreeRow>
                  <TreeRow><TreeIconBox><PlaneTree /></TreeIconBox>Right</TreeRow>
                </TreeList>
                <Selected><Pencil /><SelLabel>Sketch 1</SelLabel></Selected>
                <ScrollBar />
              </PanelTop>
              <PartsSection>
                <PartsRow><Chev c="#666" s={14} /><GroupLabel>Parts (0)</GroupLabel></PartsRow>
              </PartsSection>
            </Panel>
            <Canvas>
              <Scene />
              <SideTabs>
                <SideTab><SideA /></SideTab>
                <SideTab><SideB /></SideTab>
                <SideTab><SideC /></SideTab>
              </SideTabs>
              <MeasureTools><Tape /><Protractor /><Scale /></MeasureTools>
            </Canvas>
            <PanelToggle><ToggleI /></PanelToggle>
            <Dialog>
              <DialogHead>
                <DialogTitle>Sketch 1</DialogTitle>
                <OkBtn><Check size={26} strokeWidth={4} /></OkBtn>
                <CancelBtn><X size={24} strokeWidth={4} /></CancelBtn>
              </DialogHead>
              <FieldRow>
                <Field>
                  <FieldLabel>Sketch plane</FieldLabel>
                  <FieldValue>Top plane</FieldValue>
                  <FieldClear><X size={13} strokeWidth={1.5} /></FieldClear>
                </Field>
                <ClockWrap><ClockI /></ClockWrap>
              </FieldRow>
              <CheckList>
                <CheckRow><Box />Disable imprinting</CheckRow>
                <CheckRow><Box />Show constraints</CheckRow>
                <CheckRow $on><Box $on><Check size={12} strokeWidth={4} /></Box>Show overdefined</CheckRow>
              </CheckList>
              <HelpCorner>?</HelpCorner>
            </Dialog>
          </Workspace>
          <Tabs>
            <PlusTab><Plus /></PlusTab>
            <TabItem $on $w={251}><PieceI />Piece 140</TabItem>
            <TabItem $w={252}><AsmI />Assembly 1</TabItem>
          </Tabs>
        </MainCol>
      </Body>
    </Page>
  );
}
